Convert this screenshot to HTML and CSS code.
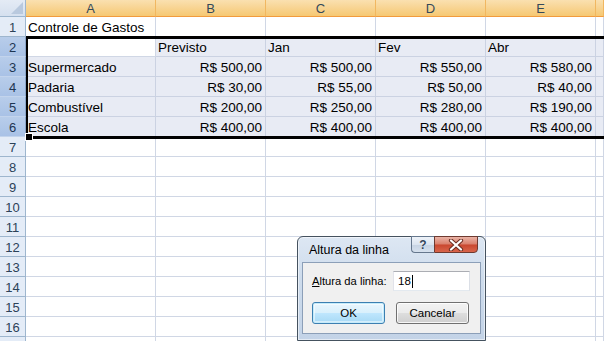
FILE: index.html
```html
<!DOCTYPE html>
<html lang="pt">
<head>
<meta charset="utf-8">
<title>Controle de Gastos</title>
<link rel="stylesheet" href="styles.css">
</head>
<body>
<div class="sheet">
  <div class="corner"><span class="tri"></span></div>
  <div class="ch">A</div><div class="ch">B</div><div class="ch">C</div><div class="ch">D</div><div class="ch">E</div><div class="ch"></div>

  <div class="rh">1</div><div class="c">Controle de Gastos</div><div class="c"></div><div class="c"></div><div class="c"></div><div class="c"></div><div class="c"></div>

  <div class="rh sel">2</div><div class="c"></div><div class="c s">Previsto</div><div class="c s">Jan</div><div class="c s">Fev</div><div class="c s">Abr</div><div class="c s"></div>

  <div class="rh sel">3</div><div class="c s">Supermercado</div><div class="c s n">R$ 500,00</div><div class="c s n">R$ 500,00</div><div class="c s n">R$ 550,00</div><div class="c s n">R$ 580,00</div><div class="c s"></div>

  <div class="rh sel">4</div><div class="c s">Padaria</div><div class="c s n">R$ 30,00</div><div class="c s n">R$ 55,00</div><div class="c s n">R$ 50,00</div><div class="c s n">R$ 40,00</div><div class="c s"></div>

  <div class="rh sel">5</div><div class="c s">Combustível</div><div class="c s n">R$ 200,00</div><div class="c s n">R$ 250,00</div><div class="c s n">R$ 280,00</div><div class="c s n">R$ 190,00</div><div class="c s"></div>

  <div class="rh sel">6</div><div class="c s">Escola</div><div class="c s n">R$ 400,00</div><div class="c s n">R$ 400,00</div><div class="c s n">R$ 400,00</div><div class="c s n">R$ 400,00</div><div class="c s"></div>

  <div class="rh">7</div><div class="c"></div><div class="c"></div><div class="c"></div><div class="c"></div><div class="c"></div><div class="c"></div>
  <div class="rh">8</div><div class="c"></div><div class="c"></div><div class="c"></div><div class="c"></div><div class="c"></div><div class="c"></div>
  <div class="rh">9</div><div class="c"></div><div class="c"></div><div class="c"></div><div class="c"></div><div class="c"></div><div class="c"></div>
  <div class="rh">10</div><div class="c"></div><div class="c"></div><div class="c"></div><div class="c"></div><div class="c"></div><div class="c"></div>
  <div class="rh">11</div><div class="c"></div><div class="c"></div><div class="c"></div><div class="c"></div><div class="c"></div><div class="c"></div>
  <div class="rh">12</div><div class="c"></div><div class="c"></div><div class="c"></div><div class="c"></div><div class="c"></div><div class="c"></div>
  <div class="rh">13</div><div class="c"></div><div class="c"></div><div class="c"></div><div class="c"></div><div class="c"></div><div class="c"></div>
  <div class="rh">14</div><div class="c"></div><div class="c"></div><div class="c"></div><div class="c"></div><div class="c"></div><div class="c"></div>
  <div class="rh">15</div><div class="c"></div><div class="c"></div><div class="c"></div><div class="c"></div><div class="c"></div><div class="c"></div>
  <div class="rh">16</div><div class="c"></div><div class="c"></div><div class="c"></div><div class="c"></div><div class="c"></div><div class="c"></div>
  <div class="rh"></div><div class="c"></div><div class="c"></div><div class="c"></div><div class="c"></div><div class="c"></div><div class="c"></div>

  <div class="selbox"></div>
  <div class="handle"></div>

  <div class="dlg">
    <div class="titlebar">
      <span class="title">Altura da linha</span>
      <div class="caps">
        <div class="cap-help">?</div>
        <div class="cap-close">
          <svg width="16" height="12" viewBox="0 0 16 12">
            <path d="M3 1.5 L13 10.5 M13 1.5 L3 10.5" stroke="#6b2e22" stroke-width="4.2" stroke-linecap="round" fill="none"/>
            <path d="M3 1.5 L13 10.5 M13 1.5 L3 10.5" stroke="#ffffff" stroke-width="2.2" stroke-linecap="round" fill="none"/>
          </svg>
        </div>
      </div>
    </div>
    <div class="panel">
      <div class="field">
        <span class="label"><u>A</u>ltura da linha:</span>
        <div class="input">18<span class="caret"></span></div>
      </div>
      <div class="buttons">
        <div class="btn def">OK</div>
        <div class="btn">Cancelar</div>
      </div>
    </div>
  </div>
</div>
</body>
</html>
```
FILE: styles.css
```css
html, body {
  margin: 0;
  padding: 0;
  background: #fff;
}
body {
  width: 604px;
  height: 341px;
  overflow: hidden;
  font-family: "Liberation Sans", Arial, sans-serif;
}
.sheet {
  position: relative;
  display: grid;
  grid-template-columns: 26px 130px 110px 110px 110px 110px 1fr;
  grid-template-rows: 17px;
  grid-auto-rows: 20px;
  width: 604px;
}
.corner {
  position: relative;
  box-sizing: border-box;
  background: linear-gradient(#e4ebf5, #d5e0ef);
  border-right: 1px solid #9eb6ce;
  border-bottom: 1px solid #9eb6ce;
}
.corner .tri {
  position: absolute;
  right: 2px;
  bottom: 2px;
  width: 0;
  height: 0;
  border-left: 12px solid transparent;
  border-bottom: 12px solid #b9c9de;
}
.ch {
  box-sizing: border-box;
  background: linear-gradient(#fae0b0 0%, #f8d595 45%, #f6c872 100%);
  border-right: 1px solid #f1b760;
  border-bottom: 1px solid #f29b3d;
  color: #34495a;
  font-size: 13px;
  display: flex;
  align-items: center;
  justify-content: center;
  padding-top: 1px;
}
.rh {
  box-sizing: border-box;
  background: #e4ecf7;
  border-right: 1px solid #9eb6ce;
  border-bottom: 1px solid #9eb6ce;
  color: #2c4258;
  font-size: 13px;
  display: flex;
  align-items: center;
  justify-content: center;
  padding-top: 1px;
}
.rh.sel {
  background: linear-gradient(#b8cdea, #a9c2e6);
  border-bottom-color: #c3d4ec;
  border-right-color: #8aa5c8;
  color: #1d3552;
}
.c {
  box-sizing: border-box;
  border-right: 1px solid #d0d7e5;
  border-bottom: 1px solid #d0d7e5;
  font-size: 13.5px;
  line-height: 16px;
  color: #000;
  padding: 0 2px;
  display: flex;
  align-items: flex-end;
  white-space: nowrap;
}
.c.s {
  background: #e8ebf4;
  border-right-color: #cbd2e2;
  border-bottom-color: #cbd2e2;
}
.c.n {
  justify-content: flex-end;
  padding-right: 3px;
}
.selbox {
  position: absolute;
  left: 26px;
  top: 36px;
  width: 600px;
  height: 103px;
  box-sizing: border-box;
  border-top: 3px solid #000;
  border-bottom: 3px solid #000;
  border-left: 2px solid #000;
  pointer-events: none;
}
.handle {
  position: absolute;
  left: 26px;
  top: 134px;
  width: 6px;
  height: 6px;
  background: #000;
  box-shadow: 0 0 0 1px #fff;
}

/* dialog */
.dlg {
  position: absolute;
  left: 297px;
  top: 236px;
  width: 189px;
  height: 105px;
  box-sizing: border-box;
  border: 1px solid #45525f;
  border-radius: 6px 6px 0 0;
  background: linear-gradient(#dde7f3 0%, #cedcec 40%, #c3d3e7 100%);
  box-shadow: inset 0 0 0 1px rgba(255,255,255,0.55);
  padding: 0 4px 6px 4px;
  display: flex;
  flex-direction: column;
}
.titlebar {
  position: relative;
  height: 25px;
  flex: none;
}
.title {
  display: block;
  padding-left: 7px;
  padding-top: 6px;
  font-size: 12.5px;
  color: #000;
}
.caps {
  position: absolute;
  top: -1px;
  right: 3px;
  display: flex;
}
.cap-help {
  width: 23px;
  height: 17px;
  box-sizing: border-box;
  border: 1px solid #65778d;
  border-right: none;
  border-radius: 0 0 0 4px;
  background: linear-gradient(#eef3f9 0%, #dbe4ef 50%, #c6d3e3 52%, #d6e1ee 100%);
  color: #33465c;
  font-size: 12px;
  font-weight: bold;
  display: flex;
  align-items: center;
  justify-content: center;
  text-shadow: 0 0 1px #fff;
}
.cap-close {
  width: 44px;
  height: 17px;
  box-sizing: border-box;
  border: 1px solid #6e3a30;
  border-radius: 0 0 4px 0;
  background: linear-gradient(#eab3a6 0%, #da7f6b 48%, #c9472f 52%, #d8654b 100%);
  display: flex;
  align-items: center;
  justify-content: center;
}
.panel {
  flex: 1;
  box-sizing: border-box;
  border: 1px solid #8c9fb8;
  background: #f0f0f0;
  padding: 8px 9px 0 9px;
  display: flex;
  flex-direction: column;
}
.field {
  display: flex;
  align-items: center;
  height: 20px;
}
.label {
  font-size: 11.2px;
  color: #000;
  width: 81px;
}
.input {
  width: 77px;
  height: 20px;
  box-sizing: border-box;
  border: 1px solid #abadb3;
  border-left-color: #e2e3ea;
  border-right-color: #dbdfe6;
  border-bottom-color: #e3e9ef;
  background: #fff;
  font-size: 11.5px;
  padding-left: 4px;
  display: flex;
  align-items: center;
}
.caret {
  display: inline-block;
  width: 1px;
  height: 13px;
  background: #000;
  margin-left: 1px;
}
.buttons {
  display: flex;
  gap: 11px;
  margin-top: 11px;
}
.btn {
  width: 73px;
  height: 22px;
  box-sizing: border-box;
  border: 1px solid #707070;
  border-radius: 3px;
  background: linear-gradient(#f2f2f2 0%, #ebebeb 48%, #dddddd 52%, #cfcfcf 100%);
  box-shadow: inset 0 0 0 1px rgba(255,255,255,0.8);
  font-size: 11.5px;
  display: flex;
  align-items: center;
  justify-content: center;
  color: #000;
}
.btn.def {
  border-color: #3c7fb1;
  background: linear-gradient(#eaf6fd 0%, #d9f0fc 48%, #bee6fd 52%, #a7d9f5 100%);
  box-shadow: inset 0 0 0 1px #c5ecfb, inset 0 0 0 2px rgba(255,255,255,0.5);
}
```
